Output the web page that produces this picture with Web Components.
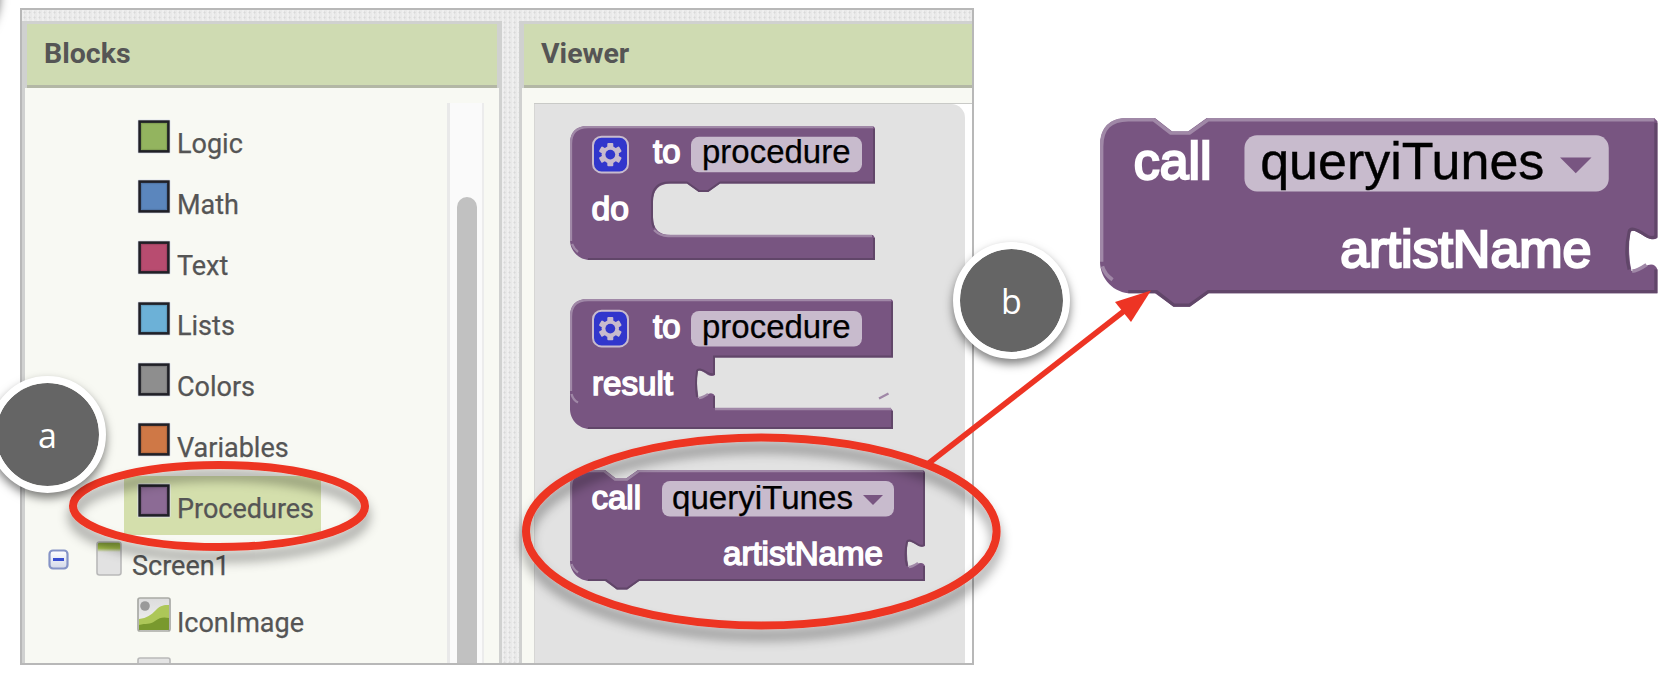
<!DOCTYPE html>
<html lang="en">
<head>
<meta charset="utf-8">
<title>Procedure blocks</title>
<style>
html,body{margin:0;padding:0;background:#fff;overflow:hidden}
body{font-family:Roboto,"Liberation Sans",sans-serif;color:#555}
</style>
</head>
<body>
<tutorial-stage>
  <editor-window>
    <editor-panel slot="blocks" label="Blocks">
      <block-tree>
        <tree-row label="Logic" color="#93b45f"></tree-row>
        <tree-row label="Math" color="#5b86bd"></tree-row>
        <tree-row label="Text" color="#b84c70"></tree-row>
        <tree-row label="Lists" color="#6cb1d7"></tree-row>
        <tree-row label="Colors" color="#8e8e8e"></tree-row>
        <tree-row label="Variables" color="#cf7846"></tree-row>
        <tree-row label="Procedures" color="#8c6b95" selected></tree-row>
        <tree-row label="Screen1" kind="screen"></tree-row>
        <tree-row label="IconImage" kind="image"></tree-row>
        <tree-row label="" kind="partial"></tree-row>
      </block-tree>
    </editor-panel>
    <editor-panel slot="viewer" label="Viewer">
      <block-flyout>
        <code-block kind="do"></code-block>
        <code-block kind="result"></code-block>
        <code-block kind="call"></code-block>
      </block-flyout>
    </editor-panel>
  </editor-window>
  <code-block slot="result" kind="call" class="large"></code-block>
  <callout-marks slot="marks"></callout-marks>
  <step-badge slot="marks" style="left:-117px;top:-68px"></step-badge>
  <step-badge slot="marks" style="left:-11px;top:376px">a</step-badge>
  <step-badge slot="marks" style="left:953px;top:242px">b</step-badge>
</tutorial-stage>

<script>
const define = (name, render) => customElements.define(name, class extends HTMLElement {
  connectedCallback() {
    if (this.shadowRoot) return;
    this.attachShadow({mode: 'open'}).innerHTML = render(this);
  }
});

define('tutorial-stage', () => `
<style>
:host{display:flex;position:relative;width:1670px;height:678px;overflow:hidden;align-items:flex-start;padding:8px 0 0 20px;box-sizing:border-box}
::slotted(code-block){margin:110px 0 0 126px;--w:559px;--h:191px}
</style>
<slot></slot><slot name="result"></slot><slot name="marks"></slot>`);

define('editor-window', () => `
<style>
:host{display:grid;grid-template-columns:480px 453px;column-gap:17px;flex:none;box-sizing:border-box;width:954px;height:657px;border:2px solid #b8b8b8;padding-top:11px;overflow:hidden;
background-color:#e9e9e9;
background-image:radial-gradient(circle,rgba(120,120,120,.14) 0 .7px,transparent 1.4px),radial-gradient(circle,rgba(120,120,120,.22) 0 1px,transparent 2px),linear-gradient(90deg,rgba(255,255,255,.25) 50%,transparent 50%);
background-size:5px 5px,35px 39px,5px 5px}
</style>
<slot name="blocks"></slot><slot name="viewer"></slot>`);

define('editor-panel', el => `
<style>
:host{display:flex;flex-direction:column;box-sizing:border-box;height:643px;padding:3px 3px 0;background:#d0d1d0;overflow:hidden}
:host([label=Viewer]){padding-right:0}
header{box-sizing:border-box;flex:none;height:64px;margin:0 2px;padding:0 17px;background:#cfdbb2;border-bottom:3px solid #b3b7a5;font:700 28.5px/59px Roboto,sans-serif;color:#555}
:host([label=Viewer]) header{margin-right:0}
main{flex:1;min-height:0;background:#f8f9f3;display:flex;overflow:hidden}
</style>
<header>${el.getAttribute('label')}</header><main><slot></slot></main>`);

define('block-tree', () => `
<style>
:host{display:flex;width:474px;height:100%;overflow:hidden}
.rows{width:422px;padding-top:23px;flex:none}
.bar{box-sizing:border-box;width:37px;margin-top:15px;border-left:3px solid #e9e9e9;border-right:2px solid #ececec;background:#fafafa;padding:94px 5px 0 7px;display:flex}
.thumb{width:20px;height:600px;border-radius:10px;background:#c1c1c1}
</style>
<div class="rows"><slot></slot></div><div class="bar"><div class="thumb"></div></div>`);

define('tree-row', el => {
  const kind = el.getAttribute('kind') || 'drawer';
  const icons = {
    drawer: `<svg width="34" height="35" viewBox="0 0 34 35"><rect x=".5" y=".5" width="33" height="34" rx="1.5" fill="#dfe3ee"/><rect x="2.6" y="2.6" width="28.8" height="29.8" fill="${el.getAttribute('color')}" stroke="#202026" stroke-width="2.6"/><rect x="4.6" y="4.6" width="24.8" height="25.8" fill="none" stroke="#000" stroke-opacity=".12"/></svg>`,
    screen: `<svg width="26" height="35" viewBox="0 0 26 35"><defs><linearGradient id="g" x2="0" y2="1"><stop offset="0" stop-color="#7f9c35"/><stop offset=".19" stop-color="#a5c04b"/><stop offset=".3" stop-color="#e2e2e2"/></linearGradient></defs><rect x="1" y="1" width="24" height="33" rx="2.5" fill="url(#g)" stroke="#b9b9b9" stroke-width="1.6"/></svg>`,
    image: `<svg width="34" height="35" viewBox="0 0 34 35"><defs><linearGradient id="s" x2="0" y2="1"><stop offset="0" stop-color="#dcdcdc"/><stop offset="1" stop-color="#f4f4f4"/></linearGradient></defs><rect x="1" y="1" width="32" height="33" rx="2" fill="url(#s)"/><path d="M2 22C10 21 14 18 19 13S27 8 32 8V33H2Z" fill="#adc758"/><path d="M2 28C9 26 13 28 18 24S27 20 32 21V33H2Z" fill="#79992e"/><circle cx="8" cy="9" r="4.8" fill="#999"/><rect x="1" y="1" width="32" height="33" rx="2" fill="none" stroke="#a9aaa5" stroke-width="1.7"/></svg>`,
    partial: `<svg width="34" height="35" viewBox="0 0 34 35"><rect x="1" y="1" width="32" height="33" rx="2" fill="#e4e4e4" stroke="#b9b9b9" stroke-width="1.6"/></svg>`
  };
  const toggle = `<svg class="toggle" width="21" height="21" viewBox="0 0 21 21"><defs><linearGradient id="t" x2="0" y2="1"><stop offset="0" stop-color="#fff"/><stop offset="1" stop-color="#d3d8e8"/></linearGradient></defs><rect x="1.5" y="1.5" width="18" height="18" rx="3.5" fill="url(#t)" stroke="#8593c6" stroke-width="2.2"/><path d="M5 10.5H16" stroke="#3a4fd0" stroke-width="3"/></svg>`;
  return `
<style>
:host{display:flex;height:60.8px}
.item{display:flex;box-sizing:border-box;height:59px;margin-left:99px;padding:7.5px 0 0 13px;width:max-content;gap:6px}
:host([selected]) .item{width:197px;background:#d4dfac}
span{font:400 27px/32px Roboto,sans-serif;color:#555;-webkit-text-stroke:.25px #555;white-space:nowrap;padding-top:9.5px;height:32px}
svg{flex:none}
:host([kind=screen]){height:60px}
:host([kind=screen]) .item{margin-left:27px;padding:4px 0 0 0;gap:10px}
:host([kind=screen]) span{padding-top:9px}
.toggle{margin:12px 0 0 23px}
:host([kind=image]){height:60px}
:host([kind=image]) .item{padding-top:0}
:host([kind=image]) span{padding-top:10px}
:host([kind=partial]) .item{padding-top:0}
</style>
${kind === 'screen' ? toggle : ''}<div class="item">${icons[kind]}<span>${el.getAttribute('label')}</span></div>`;
});

define('block-flyout', () => `
<style>
:host{display:flex;width:451px;height:600px;margin:15px 0 0 12px;box-sizing:border-box;background:#fff;border-top:1px solid #c9cac7;flex:none}
div{box-sizing:border-box;width:431px;height:600px;border-left:1px solid #d6d6d4;border-top-right-radius:14px;background:#e2e2e2;padding:22px 0 0 35px;display:flex;flex-direction:column}
::slotted([kind=do]){--w:306px;--h:134px;margin-bottom:39px}
::slotted([kind=result]){--w:324px;--h:131px;margin-bottom:40px}
::slotted([kind=call]){--w:356px;--h:121px}
</style>
<div><slot></slot></div>`);

/* Each block is drawn in its own coordinates, with the body's top left corner at 0,0. */
const gear = y => `<g transform="translate(0 ${y})"><rect x="23" y="10.8" width="35" height="35.6" rx="8.5" fill="#3136cc" stroke="#c8bbcd" stroke-width="2"/>
<g transform="translate(40.3 28.6)" fill="#c8bbcd">${[0,60,120,180,240,300].map(a => `<rect x="-3" y="-11.6" width="6" height="7" rx="1" transform="rotate(${a})"/>`).join('')}<circle r="8.7"/><circle r="4.9" fill="#3136cc"/></g></g>`;
const label = (x, y, w, t) => `<text x="${x}" y="${y}" textLength="${w}" lengthAdjust="spacingAndGlyphs" class="label">${t}</text>`;
const field = (x, y, w, h, tx, ty, tw, t) => `<rect x="${x}" y="${y}" width="${w}" height="${h}" rx="8" fill="#c8bbcd"/><text x="${tx}" y="${ty}" textLength="${tw}" lengthAdjust="spacingAndGlyphs" class="value">${t}</text>`;
const body = (d, hi, lo) => `<path d="${d}" fill="#785581"/><g fill="none" stroke-width="2"><path d="${lo}" stroke="#614669"/><path d="${hi}" stroke="#a088a7" stroke-width="2.3"/></g>`;
const blocks = {
  do: [306, 134,
    body('M0 18Q0 0 18 0H303L305 2V57.5H150L138 66H129L117 57.5H101Q83 57.5 83 76V91Q83 109 101 109H303L305 112V134H20C9 134 0 125 0 114Z',
      'M1 115V18Q1 1 18 1H303M84 104Q90 110 98 110H302M2 118Q4 123 8 126',
      'M304 3V56.5H150L138 65H129L117 56.5H99Q82 56.5 82 75V92Q82 98 84 102M304 112V133H18') +
    gear(0) + label(83, 37.3, 27.5, 'to') + field(121, 10.8, 171, 35.5, 132, 37.3, 148.5, 'procedure') + label(21.5, 94, 37.5, 'do')],
  result: [324, 131,
    body('M0 18Q0 0 18 0H321L323 2V58.5H145V76Q142 78 138 76Q128 69 127.5 73Q126 85 128.5 99Q131 100 138 95Q143 93 145 97V109.5H321L323 112V130H20C9 130 0 121 0 110Z',
      'M1 92V18Q1 1 18 1H321M145 110H321M1.5 95Q3 101 8 103.5M129 99Q132 99 138 95M309 99.5L318.5 94.5',
      'M322 3V57.5H144V75Q141 76 138 74Q128 68 127 72Q125 85 127 98M144 97V109M322 112V129H18') +
    gear(1) + label(83, 39.3, 27.5, 'to') + field(121, 12, 171, 35.5, 132, 39.3, 148.5, 'procedure') + label(22, 95.5, 81, 'result')],
  call: [356, 121,
    body('M0 18Q0 0 18 0H35L46 8.5H56L68 0H353L355 2V76Q352 78 347 75Q338 69 337.5 73Q336 86 338.5 97Q341 98 347 94Q353 91 355 96V111H69L57 119.5H47L35 111H20C9 111 0 102 0 91Z',
      'M1 91V18Q1 1 18 1H34L45 9.5H57L69 1H353M1.5 94Q3 99 8 102.5M339 97Q342 97 348 93',
      'M354 3V75Q351 77 347 74Q338 68 337 72Q334 85 337 96M354 96V110H69L57 118.5H47L36 110H18') +
    label(21.5, 38.5, 49.5, 'call') + field(92, 11, 232, 35.5, 102, 38.5, 181, 'queryiTunes') +
    '<path d="M293 25H313L303 35Z" fill="#785581"/>' + label(153, 94.5, 160, 'artistName')]
};
define('code-block', el => {
  const [w, h, art] = blocks[el.getAttribute('kind')];
  return `
<style>
:host{display:block;flex:none;width:var(--w);height:var(--h)}
svg{display:block;width:100%;height:100%}
text{font-family:"Liberation Sans",Arial,sans-serif;font-size:33px}
.label{fill:#fff;stroke:#fff;stroke-width:1.5px}.value{fill:#000;stroke:#000;stroke-width:.25px}
</style>
<svg viewBox="0 0 ${w} ${h}" preserveAspectRatio="none">${art}</svg>`;
});

define('callout-marks', () => `
<style>:host{display:block;position:absolute;inset:0}svg{display:block}</style>
<svg width="1670" height="678" viewBox="0 0 1670 678">
<defs><filter id="shade" x="-20%" y="-30%" width="140%" height="170%"><feDropShadow dx="0" dy="10" stdDeviation="6" flood-color="#000" flood-opacity=".42"/></filter></defs>
<g fill="none" stroke="#ed3424" stroke-width="8"><ellipse cx="219" cy="506" rx="146" ry="41" filter="url(#shade)"/><ellipse cx="761.3" cy="531.5" rx="235.3" ry="94" filter="url(#shade)"/><path d="M929 463L1126 309.5" stroke-width="5.6"/></g>
<path d="M1151 290.5L1115 302L1131 322Z" fill="#ed3424"/>
</svg>`);

define('step-badge', () => `
<style>
:host{position:absolute;display:flex;align-items:center;justify-content:center;box-sizing:border-box;width:117px;height:117px;border:7px solid #fff;border-radius:50%;background:#656565;background-clip:padding-box;box-shadow:0 5px 10px rgba(0,0,0,.5);font:500 34px/1 "Open Sans",sans-serif;color:#fff}
</style><slot></slot>`);
</script>
</body>
</html>
